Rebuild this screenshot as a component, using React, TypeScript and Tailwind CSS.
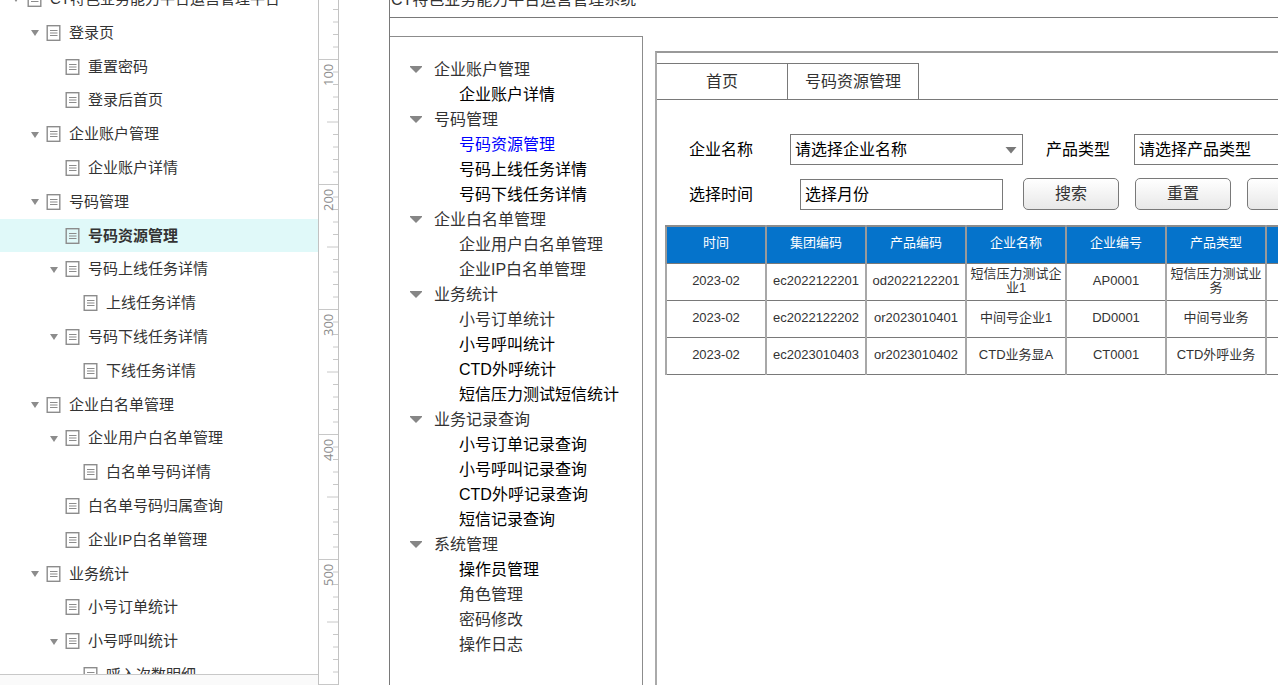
import { useState } from 'react';

type Page = { name: string; level: number; open?: boolean };

const pages: Page[] = [
  { name: 'CT特色业务能力平台运营管理平台', level: 0, open: true },
  { name: '登录页', level: 1, open: true },
  { name: '重置密码', level: 2 },
  { name: '登录后首页', level: 2 },
  { name: '企业账户管理', level: 1, open: true },
  { name: '企业账户详情', level: 2 },
  { name: '号码管理', level: 1, open: true },
  { name: '号码资源管理', level: 2 },
  { name: '号码上线任务详情', level: 2, open: true },
  { name: '上线任务详情', level: 3 },
  { name: '号码下线任务详情', level: 2, open: true },
  { name: '下线任务详情', level: 3 },
  { name: '企业白名单管理', level: 1, open: true },
  { name: '企业用户白名单管理', level: 2, open: true },
  { name: '白名单号码详情', level: 3 },
  { name: '白名单号码归属查询', level: 2 },
  { name: '企业IP白名单管理', level: 2 },
  { name: '业务统计', level: 1, open: true },
  { name: '小号订单统计', level: 2 },
  { name: '小号呼叫统计', level: 2, open: true },
  { name: '呼入次数明细', level: 3 },
];

const indent = ['pl-[9px]', 'pl-[28px]', 'pl-[47px]', 'pl-[65px]'];

// gray items have no interaction attached yet
const menu = [
  { title: '企业账户管理', items: [{ name: '企业账户详情' }] },
  { title: '号码管理', items: [{ name: '号码资源管理' }, { name: '号码上线任务详情' }, { name: '号码下线任务详情' }] },
  { title: '企业白名单管理', items: [{ name: '企业用户白名单管理', gray: true }, { name: '企业IP白名单管理', gray: true }] },
  { title: '业务统计', items: [{ name: '小号订单统计', gray: true }, { name: '小号呼叫统计' }, { name: 'CTD外呼统计' }, { name: '短信压力测试短信统计' }] },
  { title: '业务记录查询', items: [{ name: '小号订单记录查询' }, { name: '小号呼叫记录查询' }, { name: 'CTD外呼记录查询' }, { name: '短信记录查询' }] },
  { title: '系统管理', items: [{ name: '操作员管理' }, { name: '角色管理', gray: true }, { name: '密码修改', gray: true }, { name: '操作日志', gray: true }] },
];

const columns = ['时间', '集团编码', '产品编码', '企业名称', '企业编号', '产品类型', ''];
const rows = [
  ['2023-02', 'ec2022122201', 'od2022122201', '短信压力测试企业1', 'AP0001', '短信压力测试业务', ''],
  ['2023-02', 'ec2022122202', 'or2023010401', '中间号企业1', 'DD0001', '中间号业务', ''],
  ['2023-02', 'ec2023010403', 'or2023010402', 'CTD业务显A', 'CT0001', 'CTD外呼业务', ''],
];

function PageIcon() {
  return (
    <svg width="15" height="16" viewBox="0 0 15 16" className="shrink-0" fill="none" stroke="#8c8c8c">
      <rect x="1.2" y=".7" width="12.6" height="14.6" strokeWidth="1.4" />
      <path d="M4 5.5h7.5M4 8h7.5M4 10.5h7.5" strokeWidth="1.2" />
    </svg>
  );
}

function PageTree({ current, onSelect }: { current: string; onSelect: (name: string) => void }) {
  return (
    <aside className="flex w-[319px] shrink-0 flex-col border-r border-[#c2c2c2]">
      <div className="min-h-0 flex-1 overflow-hidden">
        <ul className="-mt-[18px] grid h-[710px] auto-rows-fr text-[15px] leading-5 text-[#333]">
          {pages.map((p, i) => (
            <li key={i} className={p.name === current ? 'bg-[#e0f9f9] font-bold' : ''}>
              <a href="#" onClick={() => onSelect(p.name)} className={`flex h-full items-center whitespace-nowrap ${indent[p.level]}`}>
                <span className="mt-px mr-1 flex w-[14px] shrink-0 justify-center">
                  {p.open && <svg width="8" height="6" viewBox="0 0 8 6"><path d="M0 0h8L4 6z" fill="#8c8c8c" /></svg>}
                </span>
                <PageIcon />
                <span className="ml-2">{p.name}</span>
              </a>
            </li>
          ))}
        </ul>
      </div>
      <div className="h-[11px] shrink-0 border-t border-[#c8c8c8] bg-[#fafafa]" />
    </aside>
  );
}

function Ruler() {
  const ticks = Array.from({ length: 110 }, (_, i) => i - 5);
  return (
    <div className="w-5 shrink-0 overflow-hidden border-r border-[#c2c2c2]">
      <svg width="19" height="1400" viewBox="0 0 19 1400">
        {ticks.map(n => {
          const y = 59.5 + n * 12.5;
          const len = n % 10 === 0 ? 19 : n % 5 === 0 ? 11 : 5;
          return <path key={n} d={`M${19 - len} ${y}h${len}`} stroke="#c8c8c8" />;
        })}
        {[100, 200, 300, 400, 500, 600, 700, 800].map(v => (
          <text key={v} transform={`translate(14 ${v * 1.25 - 39}) rotate(-90)`} fontSize="13" fill="#8c8c8c" className="font-['Open_Sans',sans-serif]">{v}</text>
        ))}
      </svg>
    </div>
  );
}

function SideMenu({ current }: { current: string }) {
  return (
    <nav className="w-[253px] shrink-0 border-t border-r border-[#8c8c8c] pt-5 text-base leading-[25px]">
      {menu.map(group => (
        <section key={group.title}>
          <h2 className="flex items-center pl-5 text-[#333]">
            <svg width="12" height="7" viewBox="0 0 12 7" className="mr-3"><path d="M0 0h12v1L6 7 0 1z" fill="#868686" /></svg>
            {group.title}
          </h2>
          <ul>
            {group.items.map((item: { name: string; gray?: boolean }) => (
              <li key={item.name} className="pl-[69px]">
                <a href="#" className={item.name === current ? 'text-[#0000ff]' : item.gray ? 'text-[#333]' : 'text-black'}>{item.name}</a>
              </li>
            ))}
          </ul>
        </section>
      ))}
    </nav>
  );
}

function SelectBox({ id, placeholder }: { id: string; placeholder: string }) {
  return (
    <div className="relative w-[233px] shrink-0">
      <select id={id} className="block h-[31px] w-full appearance-none border border-[#797979] bg-white pt-px pl-1 text-base leading-6 text-black">
        <option>{placeholder}</option>
      </select>
      <svg width="12" height="7" viewBox="0 0 12 7" className="pointer-events-none absolute top-[13px] right-[6px]"><path d="M.5 0h11L6 6.5z" fill="#797979" /></svg>
    </div>
  );
}

const button = 'h-8 w-24 shrink-0 rounded-[5px] border border-[#797979] bg-linear-to-b from-white to-[#e8e8e8] text-[#333]';

function Filters() {
  return (
    <form className="pt-[34px] pl-8 text-base text-black" onSubmit={e => e.preventDefault()}>
      <div className="flex items-center">
        <label htmlFor="company" className="w-[101px] shrink-0">企业名称</label>
        <SelectBox id="company" placeholder="请选择企业名称" />
        <label htmlFor="product" className="ml-[23px] w-[88px] shrink-0">产品类型</label>
        <SelectBox id="product" placeholder="请选择产品类型" />
      </div>
      <div className="mt-[13px] flex items-end">
        <label htmlFor="month" className="w-[111px] shrink-0 leading-[31px]">选择时间</label>
        <input id="month" type="text" placeholder="选择月份" className="h-[31px] w-[203px] shrink-0 border border-[#797979] pl-1 placeholder:text-black" />
        <div className="ml-5 flex gap-4">
          <button type="submit" className={button}>搜索</button>
          <button type="reset" className={button}>重置</button>
          <button type="button" className={button} aria-label="导出"></button>
        </div>
      </div>
    </form>
  );
}

function ResourceTable() {
  return (
    <table className="mt-[15px] ml-2 w-[702px] table-fixed border-collapse text-center text-[13px] leading-[14px] text-[#333]">
      <thead>
        <tr className="h-[37px] bg-[#0573cb] text-white">
          {columns.map((c, i) => <th key={i} className="border-x-2 border-t-2 border-b border-x-[#9a9a9a] border-t-[#8c8c8c] border-b-[#797979] p-0 pb-[3px] font-normal">{c}</th>)}
        </tr>
      </thead>
      <tbody>
        {rows.map((r, i) => (
          <tr key={i} className="h-[37px]">
            {r.map((cell, j) => <td key={j} className="border-x-2 border-y border-x-[#a8a8a8] border-y-[#797979] p-0 pb-px">{cell}</td>)}
          </tr>
        ))}
      </tbody>
    </table>
  );
}

export default function App() {
  const [current, setCurrent] = useState('号码资源管理');

  return (
    <div className="flex h-screen overflow-hidden bg-white font-['Liberation_Sans','Noto_Sans_CJK_SC',sans-serif]">
      <PageTree current={current} onSelect={setCurrent} />
      <Ruler />
      <main className="ml-[50px] flex min-w-0 flex-1 flex-col overflow-hidden border-l border-[#797979]">
        <header className="h-[18px] shrink-0 overflow-hidden border-b border-[#797979]">
          <h1 className="-mt-3 pl-px text-base leading-6 text-[#333]">CT特色业务能力平台运营管理系统</h1>
        </header>
        <div className="flex min-h-0 flex-1 pt-[18px]">
          <SideMenu current="号码资源管理" />
          <section className="mt-[15px] ml-3 min-w-0 flex-1 overflow-hidden border-t-2 border-l-2 border-t-[#999] border-l-[#aaa]">
            <div className="mt-[10px] flex h-[37px] border-b border-[#797979] text-base text-[#333]">
              <button className="w-[131px] border-t border-r border-[#797979]">首页</button>
              <button className="w-[131px] border-t border-r border-[#797979]">号码资源管理</button>
            </div>
            <Filters />
            <ResourceTable />
          </section>
        </div>
      </main>
    </div>
  );
}
